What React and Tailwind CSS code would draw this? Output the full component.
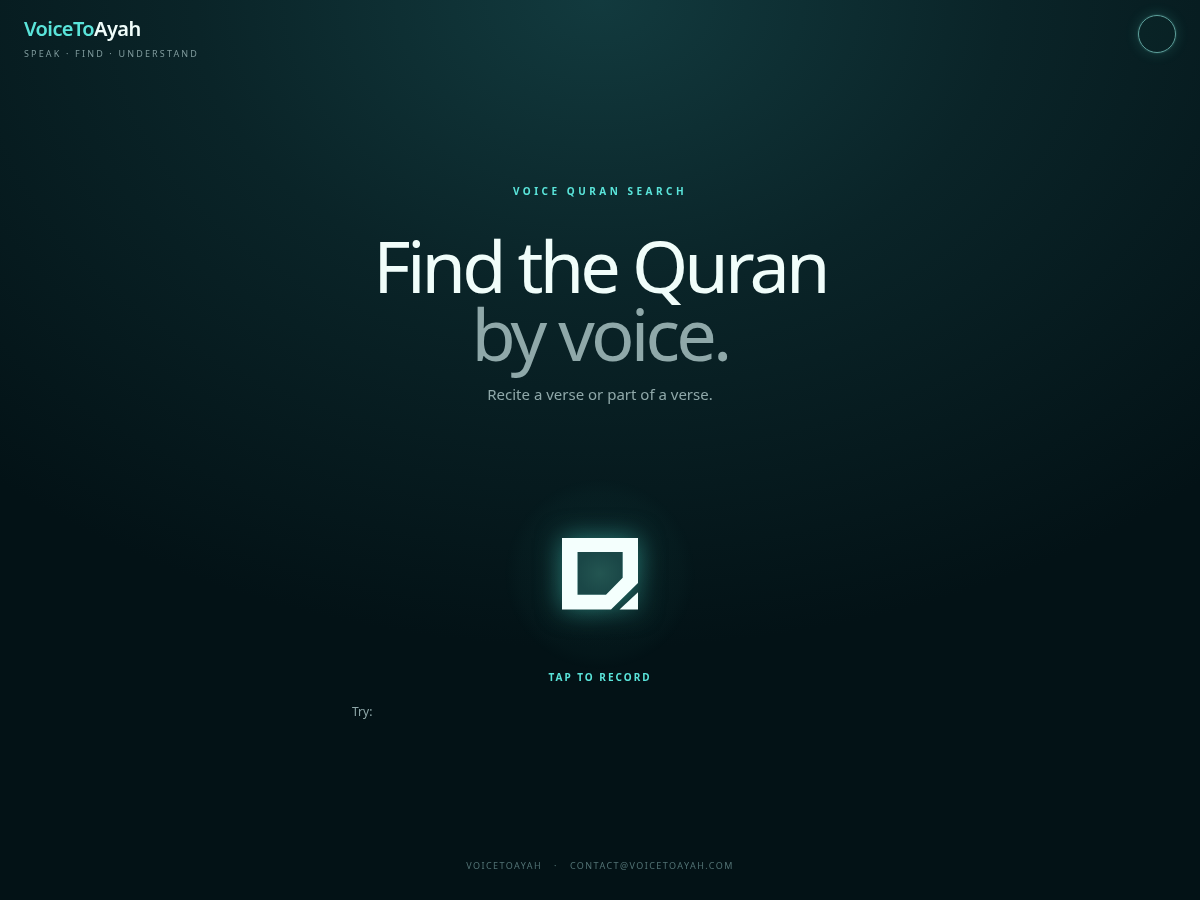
export default function App() {
  return (
    <div className="min-h-screen h-[900px] flex flex-col overflow-hidden font-['Noto_Sans',sans-serif] bg-[#031116] bg-[radial-gradient(ellipse_75%_72%_at_50%_0%,#123a3e_0%,#0a2428_45%,#031216_100%)]">
      <header className="flex justify-between items-start px-6 pt-[16px] h-[70px] transform-gpu">
        <div>
          <div className="text-[20px] leading-[26px] font-semibold tracking-[-0.6px] text-[#f0fdfa]">
            <span className="text-[#5ae4da]">VoiceTo</span>Ayah
          </div>
          <div className="mt-[6px] text-[9px] leading-[12px] tracking-[0.24em] text-[#7f9a9c]">SPEAK · FIND · UNDERSTAND</div>
        </div>
        <button className="w-[38px] h-[38px] -mt-[1px] rounded-full border border-[#5fa19d] bg-[#5eead4]/[0.02] shadow-[0_0_2px_rgba(110,200,190,0.4),0_0_14px_rgba(94,234,212,0.18)]" />
      </header>

      <main className="flex-1 flex flex-col items-center transform-gpu">
        <p className="mt-[114px] text-[10px] leading-[14px] font-bold tracking-[0.35em] text-[#5ae4da]">VOICE QURAN SEARCH</p>
        <h1 className="mt-[33px] text-center text-[72px] leading-[68px] font-normal tracking-[-3.85px]">
          <span className="block text-[#f0fdfa]">Find the Quran</span>
          <span className="block text-[#8fa8a9]">by voice.</span>
        </h1>
        <p className="mt-[17px] text-[15px] leading-[20px] text-[#8fa8a9]">Recite a verse or part of a verse.</p>

        <div className="mt-[75px] w-[190px] h-[190px] rounded-full flex items-center justify-center bg-[radial-gradient(circle,rgba(94,234,212,0.06)_0%,rgba(94,234,212,0.02)_60%,transparent_72%)]">
          <button className="w-[76px] h-[72px]">
            <svg width="76" height="72" viewBox="0 0 76 72" className="block overflow-visible drop-shadow-[0_0_13px_rgba(70,215,200,0.5)]">
              <defs>
                <radialGradient id="hole">
                  <stop offset="0%" stopColor="#235551" />
                  <stop offset="100%" stopColor="#1a4747" />
                </radialGradient>
              </defs>
              <path d="M15.5 14H60.7V39.7L44 56.7H15.5Z" fill="url(#hole)" />
              <path fillRule="evenodd" fill="#f4fffd" d="M0 0H76V45L49 71.5H0ZM15.5 14V56.7H44L60.7 39.7V14Z" />
              <path fill="#f4fffd" d="M76 54.3V71.5H57.5Z" />
            </svg>
          </button>
        </div>

        <p className="mt-[1px] text-[10px] leading-[14px] font-bold tracking-[0.2em] text-[#5ae4da]">TAP TO RECORD</p>
        <div className="mt-[20px] w-[496px] text-[12px] leading-[16px] text-[#8fa8a9]">Try:</div>
      </main>

      <footer className="pb-[28px] flex justify-center gap-[12px] text-[9px] leading-[12px] tracking-[0.16em] text-[#527274] transform-gpu">
        <span>VOICETOAYAH</span>
        <span>·</span>
        <span>CONTACT@VOICETOAYAH.COM</span>
      </footer>
    </div>
  );
}
